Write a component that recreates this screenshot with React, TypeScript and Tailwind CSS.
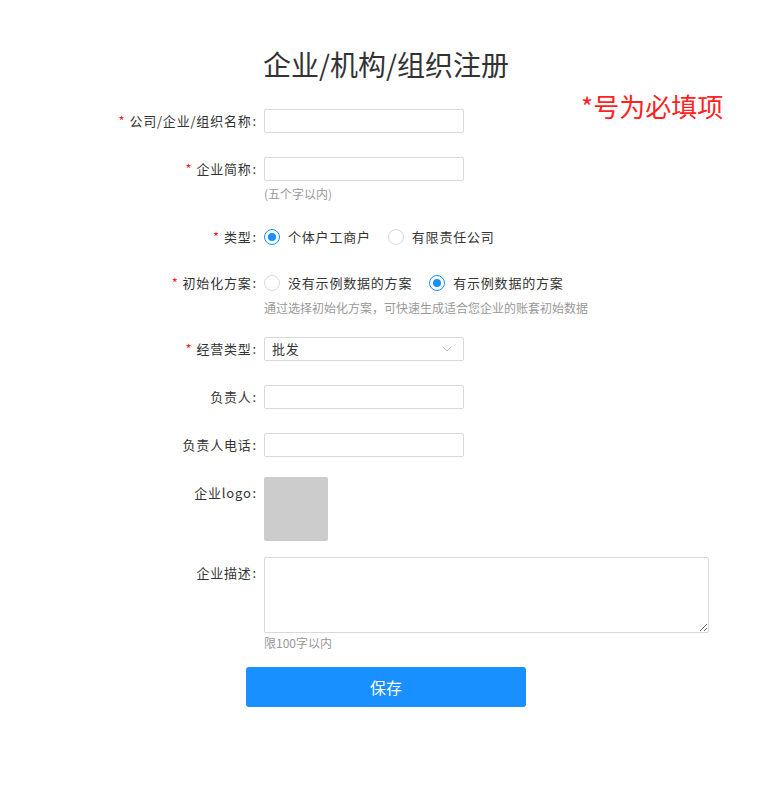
import React from "react";

const font = { fontFamily: '"Noto Sans CJK SC", "Noto Sans", sans-serif' };

function Label({ text, required, tall }: { text: string; required?: boolean; tall?: boolean }) {
  return (
    <div
      className={
        tall
          ? "w-[264px] shrink-0 pr-[7px] pt-[4px] text-right text-[13px] leading-[24px] tracking-[0.8px] text-[#333]"
          : "w-[264px] shrink-0 pr-[7px] text-right text-[13px] leading-[24px] tracking-[0.8px] text-[#333]"
      }
    >
      {required && <span className="mr-[4px] text-[#f5222d]">*</span>}
      {text}
      <span className="ml-[1px]">:</span>
    </div>
  );
}

function Radio({ checked, label }: { checked?: boolean; label: string }) {
  return (
    <div className="flex items-center">
      <div
        className={
          checked
            ? "flex h-[16px] w-[16px] items-center justify-center rounded-full border border-[#1890ff] bg-white"
            : "flex h-[16px] w-[16px] items-center justify-center rounded-full border border-[#d9d9d9] bg-white"
        }
      >
        {checked && <div className="h-[8px] w-[8px] rounded-full bg-[#1890ff]" />}
      </div>
      <span className="ml-[8px] text-[13px] leading-[24px] tracking-[0.8px] text-[#333]">{label}</span>
    </div>
  );
}

function TextInput() {
  return <input className="h-[24px] w-[200px] rounded-[2px] border border-[#d9d9d9] bg-white px-[7px] text-[13px] outline-none" />;
}

export default function App() {
  return (
    <div className="relative min-h-[785px] w-[781px] bg-white" style={font}>
      <div className="w-[772px] pt-[44px]">
        <h1 className="text-center text-[28px] leading-[40px] text-[#333]">企业/机构/组织注册</h1>

        <div className="mt-[25px] flex">
          <Label text="公司/企业/组织名称" required />
          <TextInput />
        </div>

        <div className="mt-[24px] flex">
          <Label text="企业简称" required />
          <TextInput />
        </div>
        <div className="mt-[3px] pl-[264px] text-[12px] leading-[20px] text-[#999]">(五个字以内)</div>

        <div className="mt-[21px] flex">
          <Label text="类型" required />
          <div className="flex items-center gap-[17px]">
            <Radio checked label="个体户工商户" />
            <Radio label="有限责任公司" />
          </div>
        </div>

        <div className="mt-[22px] flex">
          <Label text="初始化方案" required />
          <div className="flex items-center gap-[17px]">
            <Radio label="没有示例数据的方案" />
            <Radio checked label="有示例数据的方案" />
          </div>
        </div>
        <div className="mt-[3px] pl-[264px] text-[12px] leading-[20px] text-[#999]">
          通过选择初始化方案，可快速生成适合您企业的账套初始数据
        </div>

        <div className="mt-[19px] flex">
          <Label text="经营类型" required />
          <div className="flex h-[24px] w-[200px] items-center justify-between rounded-[2px] border border-[#d9d9d9] bg-white pl-[7px] pr-[11px]">
            <span className="text-[13px] tracking-[0.8px] text-[#333]">批发</span>
            <svg width="10" height="6" viewBox="0 0 10 6" fill="none">
              <path d="M0.5 0.5L5 5L9.5 0.5" stroke="#bfbfbf" strokeWidth="1" />
            </svg>
          </div>
        </div>

        <div className="mt-[24px] flex">
          <Label text="负责人" />
          <TextInput />
        </div>

        <div className="mt-[24px] flex">
          <Label text="负责人电话" />
          <TextInput />
        </div>

        <div className="mt-[20px] flex">
          <Label text="企业logo" tall />
          <div className="h-[64px] w-[64px] rounded-[2px] bg-[#cccccc]" />
        </div>

        <div className="mt-[16px] flex">
          <Label text="企业描述" tall />
          <textarea className="block h-[76px] w-[445px] rounded-[2px] border border-[#d9d9d9] bg-white p-[6px] text-[13px] outline-none" />
        </div>
        <div className="pl-[264px] text-[12px] leading-[20px] text-[#999]">限100字以内</div>

        <div className="mt-[14px] flex justify-center">
          <button className="h-[40px] w-[280px] rounded-[3px] bg-[#1890ff] text-[16px] text-white">保存</button>
        </div>
      </div>

      <div className="absolute left-[581px] top-[87px] text-[26px] leading-[38px] text-[#ff2222]">*号为必填项</div>
    </div>
  );
}
